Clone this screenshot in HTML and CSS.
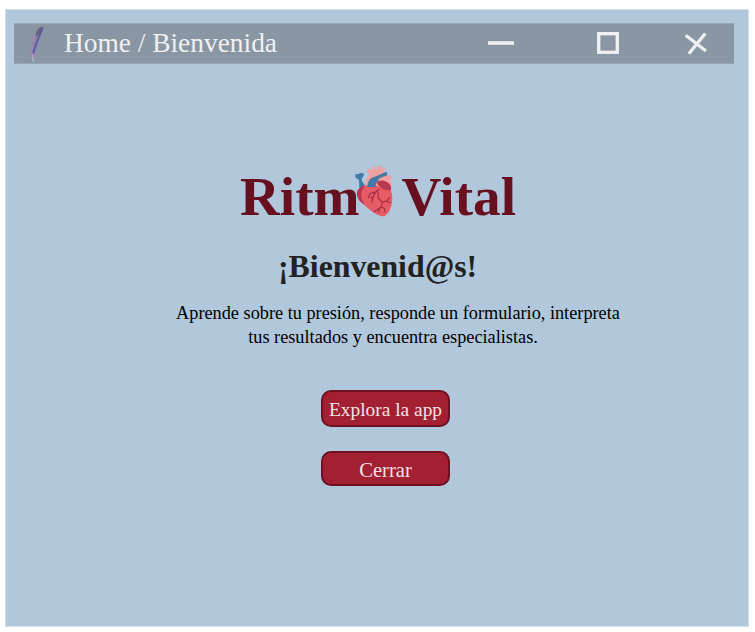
FILE: index.html
```html
<!DOCTYPE html>
<html lang="es">
<head>
<meta charset="utf-8">
<title>Ritmo Vital</title>
<link rel="stylesheet" href="styles.css">
</head>
<body>
<div class="window">
  <header class="titlebar">
    <svg class="feather" viewBox="0 0 18 40">
      <path d="M15.5 2.5C11 2.5 8.5 6 6.5 12C4.5 18 2 27 2.5 31L5 35L7 31C9 24 11 18 13 12C14 8 16 5 15.5 2.5Z" fill="#8d7da8"/>
      <path d="M15.5 2.5C11 2.5 9 6 7.5 11L10 12L13 7Z" fill="#6a6474"/>
      <path d="M14.5 4.5C11 12 8.5 19 5 29" fill="none" stroke="#4a56a8" stroke-width="1.5"/>
      <path d="M4.5 20L3.5 29M7 13L5.5 18" stroke="#a58bac" stroke-width="1.4"/>
      <path d="M2.5 30L5 35L7 30" fill="#af8fc0"/>
      <path d="M4.5 33L5.7 38" stroke="#c5cbd8" stroke-width="1"/>
    </svg>
    <span class="crumb">Home / Bienvenida</span>
    <svg class="minimize" viewBox="0 0 26 6"><path d="M0 3H26" stroke="#f0f0f0" stroke-width="3.6"/></svg>
    <svg class="maximize" viewBox="0 0 22 22"><rect x="1.7" y="1.7" width="18.6" height="18.6" fill="none" stroke="#f0f0f0" stroke-width="3.3"/></svg>
    <svg class="close" viewBox="0 0 24 24"><path d="M1.7 4.3L22 20M21.3 2.5L4.8 22.8" stroke="#f0f0f0" stroke-width="3.3"/></svg>
  </header>
  <main class="content">
    <h1 class="logo">
      <span>Ritm</span>
      <svg class="heart" viewBox="0 0 150 186">
        <path d="M47 80C46 62 51 48 59 43L52 32L58 25L67 31L68 20L73 18L78 28L81 28L81 17L92 17L93 29L98 21L106 26L102 35L110 40L113 48L119 44L126 51L122 58L120 64L121 67L127 66L125 77L113 82L52 83Z" fill="#f0a0a1"/>
        <path d="M28 84L27 60L16 52L16 43L26 42L30 39L40 39L42 46L35 56L37 65L44 74L42 84Z" fill="#437aa5"/>
        <path d="M31 85C43 71 72 73 100 82C117 77 127 92 127 113C126 141 118 159 104 168C91 174 62 153 47 139C32 126 25 104 31 85Z" fill="#e65b64"/>
        <path d="M42 78C27 81 19 92 21 106C23 119 33 129 44 134C34 119 28 96 43 82Z" fill="#b93750"/>
        <path d="M82 64C98 57 116 65 122 78C126 89 122 93 116 91C98 91 89 80 82 72Z" fill="#b93750"/>
        <path d="M53 81C52 64 59 54 74 50L110 35L112 46L88 55L78 72L77 81Z" fill="#437aa5"/>
        <path d="M87 88C76 94 68 109 66 127M82 94L60 101L55 113M71 109L62 114M84 97L85 114L97 127L106 123L120 128M97 128L93 142L72 155M93 141L103 145L104 155M88 146L86 157M111 123L118 113" fill="none" stroke="#a42c45" stroke-width="3.4" stroke-linecap="round"/>
      </svg>
      <span>Vital</span>
    </h1>
    <h2 class="welcome">¡Bienvenid@s!</h2>
    <p class="intro">Aprende sobre tu presión, responde un formulario, interpreta<br><span class="second">tus resultados y encuentra especialistas.</span></p>
    <div class="actions">
      <button class="btn explore">Explora la app</button>
      <button class="btn exit">Cerrar</button>
    </div>
  </main>
</div>
</body>
</html>
```

FILE: styles.css
```css
* { box-sizing: border-box; }
body {
  margin: 0;
  padding: 9px 6px 5px 5px;
  height: 632px;
  background: #fff;
  font-family: "Liberation Serif", serif;
  overflow: hidden;
}
.window {
  height: 618px;
  padding: 13px 14px 0 8px;
  border: 1px solid #d2e0eb;
  background: #b0c7dc;
}
.titlebar {
  display: flex;
  align-items: flex-start;
  height: 41px;
  border-top: 1px solid #98a6b4;
  border-bottom: 1px solid #98a6b4;
  background: #8996a3;
}
.titlebar svg { flex: none; }
.feather { width: 18px; height: 40px; margin-left: 14px; }
.crumb {
  width: 424px;
  margin: 3px 0 0 18px;
  font-size: 27.4px;
  line-height: 32px;
  color: #f0f0f0;
}
.minimize { width: 26px; height: 6px; margin-top: 16px; }
.maximize { width: 22px; height: 22px; margin: 8px 0 0 83px; }
.close { width: 24px; height: 24px; margin: 7px 0 0 65px; }
.content { display: flex; flex-direction: column; }
.logo {
  display: flex;
  margin: 101px 0 0 226px;
  height: 64px;
  font-size: 55.2px;
  line-height: 64px;
  color: #67101f;
}
.heart { flex: none; width: 50px; height: 62px; margin: -5px 2px 0 -10px; }
.welcome {
  margin: 20px 0 0 264px;
  font-size: 31.8px;
  line-height: 36px;
  color: #222;
}
.intro {
  width: 460px;
  margin: 16px 0 0 154px;
  font-size: 18.28px;
  line-height: 24px;
  text-align: center;
  white-space: nowrap;
  color: #000;
}
.second { padding-right: 10px; }
.actions {
  display: flex;
  flex-direction: column;
  gap: 24px;
  width: 129px;
  margin: 41px 0 0 307px;
}
.btn {
  padding: 3px 0 0;
  border: 2px solid #6f1021;
  border-radius: 10px;
  background: #a32032;
  color: #f0e4e6;
  font-family: inherit;
  white-space: nowrap;
}
.explore { height: 37px; font-size: 19.4px; }
.exit { height: 35px; font-size: 20.6px; }
```
